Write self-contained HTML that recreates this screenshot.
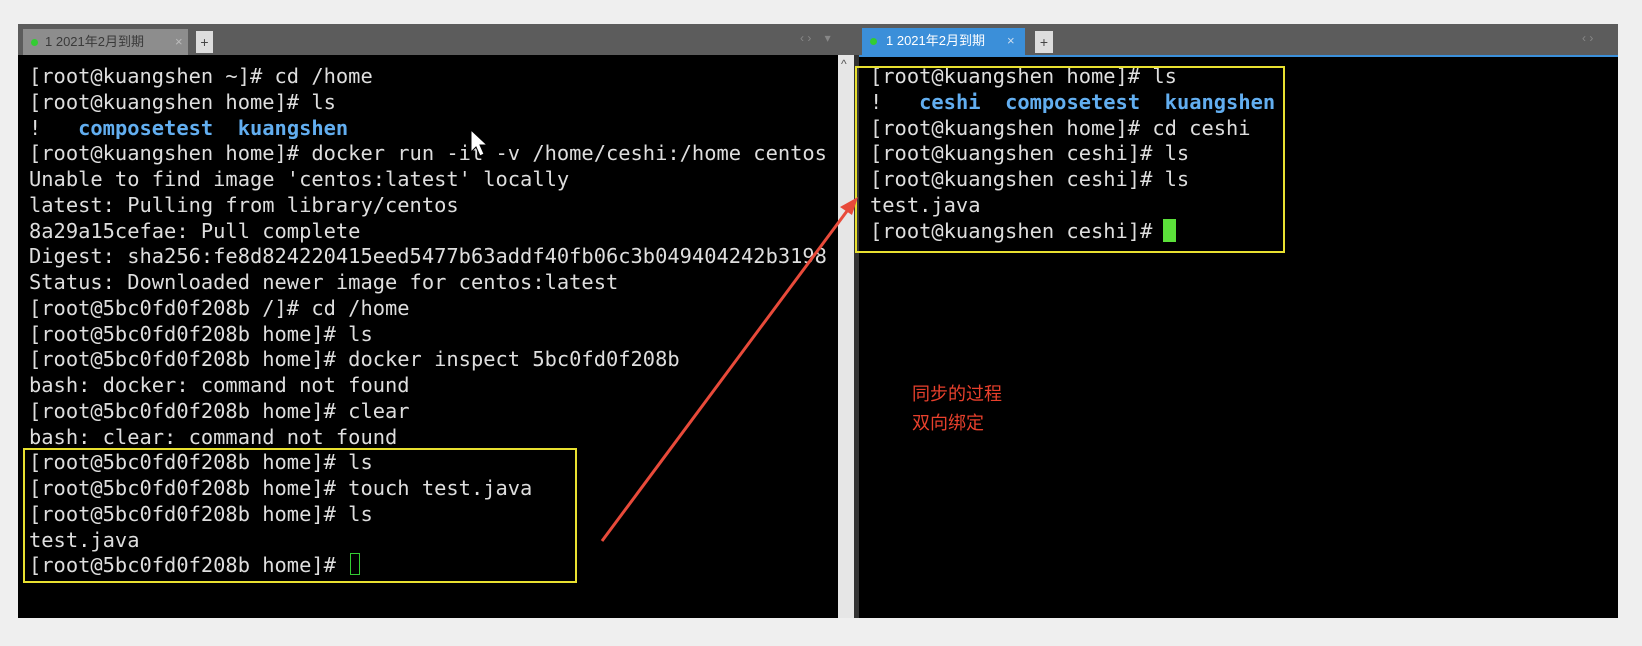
<!DOCTYPE html>
<html><head><meta charset="utf-8"><style>
body{margin:0;width:1642px;height:646px;background:#efefef;position:relative;overflow:hidden;font-family:"DejaVu Sans Mono","Liberation Mono",monospace}
.abs{position:absolute}
pre{margin:0;position:absolute;font-family:"DejaVu Sans Mono","Liberation Mono",monospace;font-size:20.4px;line-height:25.75px;color:#dedede;white-space:pre}
.b{color:#62aef0;font-weight:bold}
.tab{position:absolute;font-family:"Liberation Sans","Noto Sans CJK SC",sans-serif;font-size:13px;color:#333;box-sizing:border-box;padding-left:22px;line-height:26px;white-space:nowrap}
.dot{position:absolute;left:8px;top:10px;width:7px;height:7px;border-radius:50%;background:#3c3}
</style></head><body>
<div class="abs" style="left:18px;top:24px;width:1600px;height:594px;background:#000"></div>
<div class="abs" style="left:18px;top:24px;width:1600px;height:31px;background:#5c5c5c"></div>
<div class="tab" style="left:23px;top:29px;width:165px;height:26px;background:#8d8d8d;color:#3a3a3a">1 2021年2月到期<span class="dot"></span><span style="position:absolute;left:152px;color:#bbb">×</span></div>
<div class="abs" style="left:196px;top:31px;width:17px;height:22px;background:#ddd;color:#444;font:14px 'Liberation Sans';text-align:center;line-height:22px">+</div>
<div class="abs" style="left:800px;top:31px;color:#888;font:12px 'Liberation Sans'">‹ ›&nbsp;&nbsp;&nbsp;&nbsp;▾</div>
<div class="abs" style="left:838px;top:55px;width:16px;height:563px;background:#e6e6e6"></div>
<div class="abs" style="left:841px;top:57px;color:#555;font:12px 'Liberation Sans'">^</div>
<div class="abs" style="left:854px;top:55px;width:5px;height:563px;background:#333"></div>
<div class="abs" style="left:859px;top:24px;width:759px;height:31px;background:#5c5c5c"></div>
<div class="abs" style="left:859px;top:55px;width:759px;height:2px;background:#3b8fd9"></div>
<div class="tab" style="left:862px;top:28px;width:163px;height:27px;background:#3b8fd9;color:#fff;padding-left:24px">1 2021年2月到期<span class="dot"></span><span style="position:absolute;left:145px;color:#cde">×</span></div>
<div class="abs" style="left:1035px;top:31px;width:18px;height:22px;background:#ddd;color:#444;font:14px 'Liberation Sans';text-align:center;line-height:22px">+</div>
<div class="abs" style="left:1582px;top:31px;color:#888;font:12px 'Liberation Sans'">‹ ›</div>

<pre style="left:29px;top:64px">[root@kuangshen ~]# cd /home
[root@kuangshen home]# ls
!   <span class="b">composetest</span>  <span class="b">kuangshen</span>
[root@kuangshen home]# docker run -it -v /home/ceshi:/home centos
Unable to find image 'centos:latest' locally
latest: Pulling from library/centos
8a29a15cefae: Pull complete
Digest: sha256:fe8d824220415eed5477b63addf40fb06c3b049404242b3198
Status: Downloaded newer image for centos:latest
[root@5bc0fd0f208b /]# cd /home
[root@5bc0fd0f208b home]# ls
[root@5bc0fd0f208b home]# docker inspect 5bc0fd0f208b
bash: docker: command not found
[root@5bc0fd0f208b home]# clear
bash: clear: command not found
[root@5bc0fd0f208b home]# ls
[root@5bc0fd0f208b home]# touch test.java
[root@5bc0fd0f208b home]# ls
test.java
[root@5bc0fd0f208b home]# </pre>
<div class="abs" style="left:350px;top:553px;width:10px;height:22px;border:1.5px solid #3c3;box-sizing:border-box"></div>

<pre style="left:870px;top:64px">[root@kuangshen home]# ls
!   <span class="b">ceshi</span>  <span class="b">composetest</span>  <span class="b">kuangshen</span>
[root@kuangshen home]# cd ceshi
[root@kuangshen ceshi]# ls
[root@kuangshen ceshi]# ls
test.java
[root@kuangshen ceshi]# </pre>
<div class="abs" style="left:1163px;top:219px;width:13px;height:23px;background:#5be03a"></div>

<div class="abs" style="left:23px;top:448px;width:554px;height:135px;border:2.5px solid #e8e030;box-sizing:border-box"></div>
<div class="abs" style="left:855px;top:66px;width:430px;height:187px;border:2.5px solid #e8e030;box-sizing:border-box"></div>

<div class="abs" style="left:912px;top:379px;color:#e8402c;font:18px 'Noto Sans CJK SC',sans-serif;line-height:29px">同步的过程<br>双向绑定</div>

<svg class="abs" style="left:0;top:0" width="1642" height="646">
<line x1="602" y1="541" x2="850" y2="207" stroke="#e84a3a" stroke-width="3"/>
<polygon points="858,197 840,207 852,215" fill="#e84a3a"/>
<polygon points="471,130 471,152 476,147 480,156 484,154 480,145 487,145" fill="#fff" stroke="#000" stroke-width="1"/>
</svg>
</body></html>
